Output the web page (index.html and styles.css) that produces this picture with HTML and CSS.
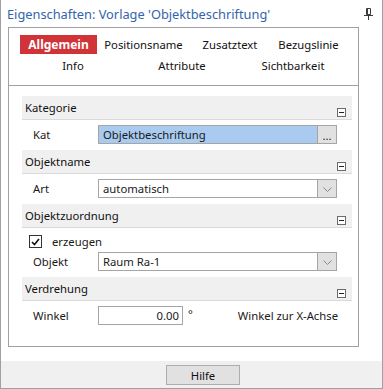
FILE: index.html
```html
<!DOCTYPE html>
<html>
<head>
<meta charset="utf-8">
<link rel="stylesheet" href="styles.css">
</head>
<body>
<div class="window">
  <div class="titlebar">
    <span class="title">Eigenschaften: Vorlage 'Objektbeschriftung'</span>
    <svg class="pin" width="9" height="12" viewBox="0 0 9 12"><path d="M2.5 0.5h4v6h-4z M3.5 1v5.5 M0 7.5h9 M4.5 8v4" fill="none" stroke="#3a3a3a" stroke-width="1"/></svg>
  </div>
  <div class="panel">
    <div class="tabs">
      <div class="tabrow r1">
        <span class="tab active">Allgemein</span>
        <span class="tab">Positionsname</span>
        <span class="tab">Zusatztext</span>
        <span class="tab">Bezugslinie</span>
      </div>
      <div class="tabrow r2">
        <span class="tab">Info</span>
        <span class="tab">Attribute</span>
        <span class="tab">Sichtbarkeit</span>
      </div>
    </div>
    <div class="content">
      <section class="group">
        <div class="band"><span>Kategorie</span><span class="collapse"></span></div>
        <div class="body">
          <div class="row">
            <span class="label">Kat</span>
            <div class="field picker"><span class="val">Objektbeschriftung</span><span class="btn dots">...</span></div>
          </div>
        </div>
      </section>
      <section class="group">
        <div class="band"><span>Objektname</span><span class="collapse"></span></div>
        <div class="body">
          <div class="row">
            <span class="label">Art</span>
            <div class="field combo"><span class="val">automatisch</span><span class="btn"><svg width="9" height="5" viewBox="0 0 9 5"><path d="M0.5 0.5l4 4 4-4" fill="none" stroke="#8a8a8a"/></svg></span></div>
          </div>
        </div>
      </section>
      <section class="group">
        <div class="band"><span>Objektzuordnung</span><span class="collapse"></span></div>
        <div class="body">
          <div class="row check">
            <span class="box"><svg width="9" height="8" viewBox="0 0 9 8"><path d="M1 4l2.5 2.5 4.5-5.5" fill="none" stroke="#111" stroke-width="1.6"/></svg></span>
            <span>erzeugen</span>
          </div>
          <div class="row">
            <span class="label">Objekt</span>
            <div class="field combo"><span class="val">Raum Ra-1</span><span class="btn"><svg width="9" height="5" viewBox="0 0 9 5"><path d="M0.5 0.5l4 4 4-4" fill="none" stroke="#8a8a8a"/></svg></span></div>
          </div>
        </div>
      </section>
      <section class="group">
        <div class="band"><span>Verdrehung</span><span class="collapse"></span></div>
        <div class="body">
          <div class="row">
            <span class="label">Winkel</span>
            <div class="field num"><span class="val">0.00</span></div>
            <span class="unit">°</span>
            <span class="hint">Winkel zur X-Achse</span>
          </div>
        </div>
      </section>
    </div>
  </div>
  <div class="spacer"></div>
  <div class="footer"><button class="help">Hilfe</button></div>
</div>
</body>
</html>
```
FILE: styles.css
```css
* { box-sizing: border-box; }
html, body { margin: 0; padding: 0; background: #fff; }
body {
  font-family: "Noto Sans", "Open Sans", sans-serif;
  font-size: 11.3px;
  color: #1a1a1a;
}
.window {
  width: 383px;
  height: 389px;
  border: 1px solid #a0a0a0;
  border-top: none;
  display: flex;
  flex-direction: column;
}
.titlebar {
  height: 27px;
  display: flex;
  align-items: flex-start;
  padding: 4px 0 0 6px;
}
.title {
  color: #3464ad;
  font-size: 12.8px;
  line-height: 20px;
  flex: 1;
}
.pin { margin: 4px 9px 0 0; }
.panel {
  height: 320px;
  margin: 0 23px 0 7px;
  border: 1px solid #a0a0a0;
  display: flex;
  flex-direction: column;
}
.tabs {
  padding: 7px 0 10px 11px;
  border-bottom: 1px solid #a0a0a0;
  display: flex;
  flex-direction: column;
  gap: 2px;
}
.tabrow {
  display: grid;
  height: 19px;
  align-items: center;
  justify-items: center;
}
.tabrow.r1 { grid-template-columns: 77px 93px 80px 77px; }
.tabrow.r2 { grid-template-columns: 106px 112px 110px; }
.tab { line-height: 19px; white-space: nowrap; color: #111; }
.tab.active {
  background: #d13438;
  color: #fff;
  font-weight: bold;
  font-size: 12px;
  width: 77px;
  text-align: center;
}
.content {
  flex: 1;
  padding: 10px 6px 0 13px;
}
.band {
  height: 24px;
  background: #f0f0f0;
  border-bottom: 1px solid #dadada;
  display: flex;
  justify-content: space-between;
  align-items: center;
  padding: 0 6px 0 3px;
  color: #111;
}
.collapse {
  width: 9px;
  height: 9px;
  border: 1px solid #6a6a6a;
  background: #fff;
  align-self: flex-end;
  margin-bottom: 2px;
  position: relative;
}
.collapse::after {
  content: "";
  position: absolute;
  left: 1px;
  right: 1px;
  top: 3px;
  height: 1px;
  background: #222;
}
.body {
  padding: 5px 0 6px 11px;
  display: flex;
  flex-direction: column;
  gap: 2px;
}
.row {
  height: 19px;
  display: flex;
  align-items: center;
}
.label { width: 65px; }
.field {
  height: 19px;
  width: 239px;
  border: 1px solid #a5a5a5;
  display: flex;
  align-items: stretch;
  background: #fff;
}
.field .val { flex: 1; padding-left: 4px; line-height: 17px; }
.field .btn {
  width: 19px;
  background: #e1e1e1;
  border-left: 1px solid #a5a5a5;
  display: flex;
  align-items: center;
  justify-content: center;
}
.field .btn.dots { align-items: flex-end; line-height: 14px; font-size: 11px; }
.picker { background: #a9cbef; }
.combo .btn svg { margin-top: 1px; }
.num { width: 85px; }
.num .val { text-align: right; padding-right: 3px; }
.unit { margin-left: 5px; margin-bottom: 4px; }
.hint { margin-left: 45px; }
.row.check { height: 17px; }
.box {
  width: 13px;
  height: 13px;
  border: 1px solid #333;
  margin: 0 10px 0 -4px;
  display: flex;
  align-items: center;
  justify-content: center;
}
.spacer { height: 14px; }
.footer {
  flex: 1;
  background: #f0f0f0;
  padding: 4px 0 0 165px;
}
.help {
  width: 74px;
  height: 20px;
  background: #e1e1e1;
  border: 1px solid #adadad;
  font-family: "Noto Sans", "Open Sans", sans-serif;
  font-size: 11.3px;
  color: #111;
  padding: 0;
}
```
